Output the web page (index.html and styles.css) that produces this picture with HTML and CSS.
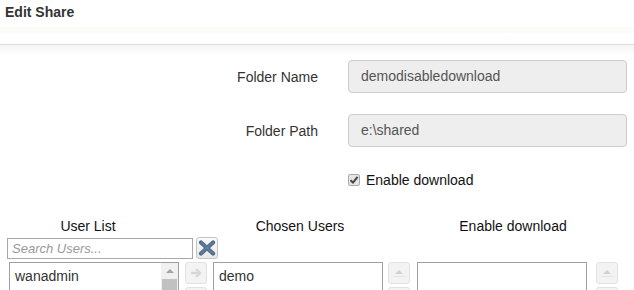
FILE: index.html
```html
<!DOCTYPE html>
<html lang="en">
<head>
    <meta charset="UTF-8">
    <title>Edit Share</title>
    <link rel="stylesheet" href="styles.css">
</head>
<body>
    <div class="modal-header">
        <h4>Edit Share</h4>
    </div>
    <div class="header-fade"></div>
    <div class="modal-body">
        <div class="form-grid">
            <label class="form-label">Folder Name</label>
            <div class="form-control">demodisabledownload</div>
            <label class="form-label">Folder Path</label>
            <div class="form-control">e:\shared</div>
            <span></span>
            <label class="check-row">
                <span class="check-box">
                    <svg width="10" height="10" viewBox="0 0 10 10"><path d="M1.5 5.2 L4 7.6 L8.6 1.8" fill="none" stroke="#444" stroke-width="2"/></svg>
                </span>
                Enable download
            </label>
        </div>

        <div class="picker">
            <div class="picker-heads">
                <span class="head-users">User List</span>
                <span class="head-chosen">Chosen Users</span>
                <span class="head-download">Enable download</span>
            </div>
            <div class="search-row">
                <div class="search-input">Search Users...</div>
                <button class="clear-btn">
                    <svg width="18" height="16" viewBox="0 0 18 16">
                        <path d="M3 2.5 L15 13.5 M15 2.5 L3 13.5" stroke="#4f6c8a" stroke-width="4.2" stroke-linecap="round"/>
                        <path d="M3.5 2.8 L14.5 13 M14.5 2.8 L3.5 13" stroke="#6f8aa5" stroke-width="1.4" stroke-linecap="round" opacity="0.7"/>
                    </svg>
                </button>
            </div>
            <div class="list-row">
                <div class="list list-users">
                    <div class="list-item">wanadmin</div>
                    <div class="scrollbar">
                        <span class="scroll-up"></span>
                        <span class="scroll-thumb"></span>
                    </div>
                </div>
                <div class="btn-col gap-a">
                    <button class="move-btn">
                        <svg width="12" height="10" viewBox="0 0 12 10"><path d="M1 5 H10 M6 1.2 L10 5 L6 8.8" fill="none" stroke="#d8d8d8" stroke-width="2.4"/></svg>
                    </button>
                    <button class="move-btn"></button>
                </div>
                <div class="list list-chosen">
                    <div class="list-item">demo</div>
                </div>
                <div class="btn-col gap-b">
                    <button class="move-btn">
                        <svg width="14" height="10" viewBox="0 0 14 10"><path d="M3 6 L7 2 L11 6 Z" fill="#d2d2d2"/><path d="M1.5 8.5 H12.5" stroke="#d2d2d2" stroke-width="1" stroke-dasharray="1 1"/></svg>
                    </button>
                    <button class="move-btn"></button>
                </div>
                <div class="list list-download"></div>
                <div class="btn-col gap-c">
                    <button class="move-btn">
                        <svg width="14" height="10" viewBox="0 0 14 10"><path d="M3 6 L7 2 L11 6 Z" fill="#d2d2d2"/><path d="M1.5 8.5 H12.5" stroke="#d2d2d2" stroke-width="1" stroke-dasharray="1 1"/></svg>
                    </button>
                    <button class="move-btn"></button>
                </div>
            </div>
        </div>
    </div>
</body>
</html>
```

FILE: styles.css
```css
body {
    margin: 0;
    font-family: "Liberation Sans", Arial, sans-serif;
    font-size: 14px;
    color: #333;
    background: #fff;
}
.modal-header {
    height: 27px;
    padding-left: 5px;
}
.modal-header h4 {
    margin: 0;
    padding-top: 4px;
    font-size: 14px;
    font-weight: bold;
    line-height: 16px;
    color: #333;
}
.header-fade {
    height: 17px;
    background: linear-gradient(#fcfaf6 0, #fdfcfa 6px, #fff 6px);
    border-bottom: 1px solid #dcdcdc;
}
.modal-body {
    background: linear-gradient(#f5f5f5, #fff 12px);
    padding-top: 15px;
}
.form-grid {
    display: grid;
    grid-template-columns: 318px 279px;
    column-gap: 30px;
    row-gap: 21px;
    align-items: center;
}
.form-label {
    text-align: right;
    color: #333;
}
.form-control {
    box-sizing: border-box;
    height: 33px;
    padding: 0 12px;
    line-height: 31px;
    background: #eee;
    border: 1px solid #ccc;
    border-radius: 4px;
    color: #555;
}
.check-row {
    display: flex;
    align-items: center;
    gap: 6px;
    margin-top: 4px;
    color: #111;
}
.check-box {
    box-sizing: border-box;
    width: 12px;
    height: 12px;
    border: 1px solid #aaa;
    border-radius: 2px;
    background: #e4e4e4;
    display: flex;
    align-items: center;
    justify-content: center;
}
.picker {
    margin-top: 29px;
}
.picker-heads {
    display: flex;
    height: 18px;
    line-height: 18px;
    color: #111;
}
.picker-heads span {
    text-align: center;
}
.head-users {
    width: 176px;
}
.head-chosen {
    width: 248px;
}
.head-download {
    width: 178px;
}
.search-row {
    display: flex;
    align-items: center;
    gap: 3px;
    margin-top: 2px;
    padding-left: 7px;
}
.search-input {
    box-sizing: border-box;
    width: 186px;
    height: 21px;
    padding-left: 4px;
    border: 1px solid #a9a9a9;
    font-size: 13px;
    line-height: 19px;
    font-style: italic;
    color: #999;
}
.clear-btn {
    box-sizing: border-box;
    width: 22px;
    height: 22px;
    padding: 0;
    border: 1px solid #c4c4c4;
    border-radius: 3px;
    background: linear-gradient(#fafafa, #e8e8e8);
    display: flex;
    align-items: center;
    justify-content: center;
}
.list-row {
    display: flex;
    align-items: flex-start;
    margin-top: 3px;
    padding-left: 9px;
}
.list {
    box-sizing: border-box;
    position: relative;
    width: 170px;
    height: 90px;
    border: 1px solid #a0a0a0;
    padding: 5px 5px;
}
.list-item {
    line-height: 16px;
    color: #333;
}
.scrollbar {
    position: absolute;
    top: 0;
    right: 0;
    width: 17px;
    bottom: 0;
    background: #f0f0f0;
}
.scroll-up {
    display: block;
    width: 0;
    height: 0;
    margin: 6px auto 0;
    border-left: 4px solid transparent;
    border-right: 4px solid transparent;
    border-bottom: 4px solid #a3a3a3;
}
.scroll-thumb {
    display: block;
    margin: 6px 0 0 1px;
    width: 15px;
    height: 40px;
    background: #c1c1c1;
}
.btn-col {
    display: flex;
    flex-direction: column;
    gap: 3px;
}
.gap-a {
    margin: 0 6px;
}
.gap-b {
    margin: 0 7px 0 5px;
}
.gap-c {
    margin: 0 0 0 9px;
}
.move-btn {
    box-sizing: border-box;
    width: 22px;
    height: 22px;
    padding: 0;
    border: 1px solid #e2e2e2;
    border-radius: 3px;
    background: #f3f3f3;
    display: flex;
    align-items: center;
    justify-content: center;
}
```
